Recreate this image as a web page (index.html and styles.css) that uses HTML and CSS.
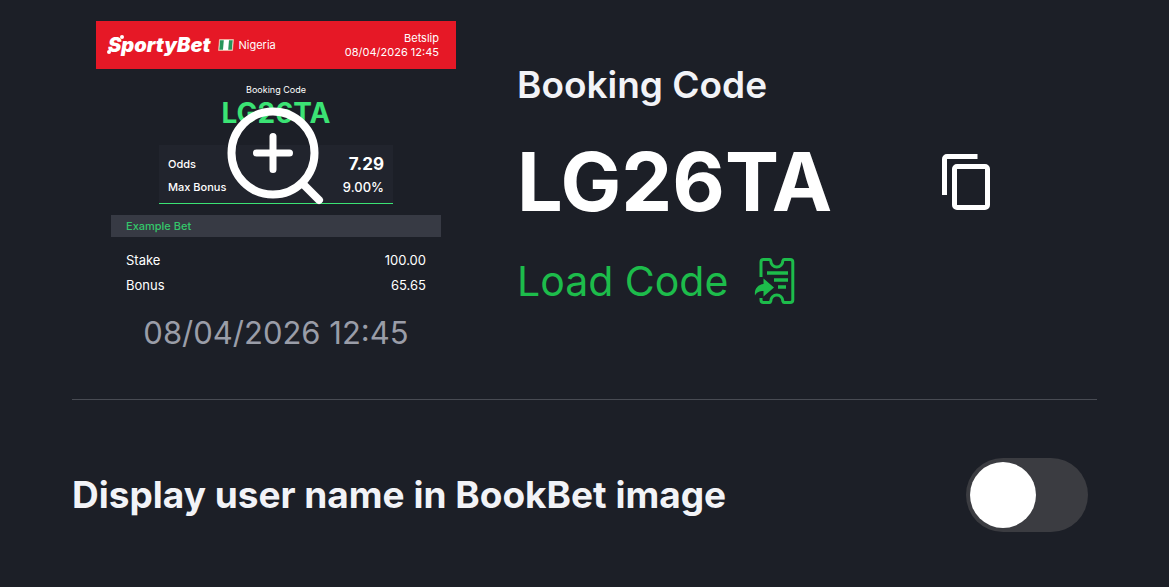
FILE: index.html
```
<!DOCTYPE html>
<html lang="en">
<head>
  <title>Booking Code</title>
  <meta charset="UTF-8">
  <meta name="viewport" content="width=device-width, initial-scale=1">
  <link rel="stylesheet" href="styles.css">
</head>
<body>
  <main class="share">
    <section class="booking">
      <div class="preview">
        <header class="slip-header">
          <span class="logo">SportyBet</span>
          <svg class="flag" viewBox="0 0 16 12" aria-hidden="true">
            <path d="M1.5 .5h14l-1 11h-14z" fill="#fff"/>
            <path d="M2 1.2h3.8l-.8 9.6H1.2zM11 1.2h3.8l-.9 9.6h-3.7z" fill="#27955a"/>
            <path d="M1.5 .5h14l-1 11h-14z" fill="none" stroke="#f3b9a0" stroke-width=".7"/>
          </svg>
          <span class="country">Nigeria</span>
          <span class="slip-date">Betslip<br>08/04/2026 12:45</span>
        </header>
        <p class="slip-label">Booking Code</p>
        <p class="slip-code">LG26TA</p>
        <dl class="odds">
          <div class="line"><dt>Odds</dt><dd class="odds-total">7.29</dd></div>
          <div class="line"><dt>Max Bonus</dt><dd class="odds-bonus">9.00%</dd></div>
        </dl>
        <h2 class="slip-title">Example Bet</h2>
        <dl class="amounts">
          <div class="line"><dt>Stake</dt><dd>100.00</dd></div>
          <div class="line"><dt>Bonus</dt><dd>65.65</dd></div>
        </dl>
        <p class="timestamp">08/04/2026 12:45</p>
        <button class="zoom" type="button" aria-label="Enlarge betslip">
          <svg viewBox="0 0 98 98" fill="none" stroke="#fff" stroke-linecap="round" aria-hidden="true">
            <circle cx="46" cy="46" r="41.5" stroke-width="8"/>
            <path d="M75 76l17 17" stroke-width="8"/>
            <path d="M46 29.500v33M29.500 46h33" stroke-width="7"/>
          </svg>
        </button>
      </div>

      <div class="details">
        <h1 class="details-label">Booking Code</h1>
        <div class="code-row">
          <strong class="code">LG26TA</strong>
          <button class="copy" type="button" aria-label="Copy code">
            <svg viewBox="0 0 48 56" fill="none" stroke="#fff" stroke-width="5" aria-hidden="true">
              <path d="M2.500 41V5a2.500 2.500 0 0 1 2.500-2.500h30.500"/>
              <rect x="12.500" y="12.500" width="33" height="41" rx="2.500"/>
            </svg>
          </button>
        </div>
        <a class="load" href="#load">
          Load Code
          <svg viewBox="0 0 42 46" fill="none" stroke="currentColor" stroke-width="3" aria-hidden="true">
            <path d="M7 19V4q0-2.500 2.500-2.500h6c1 0 1 .6 1.300 1.500a6 6 0 0 0 12 0c.3-.9.3-1.500 1.300-1.500h6q2.700 0 2.700 2.500v38q0 2.500-2.700 2.500h-6c-1 0-1-.6-1.300-1.500a6 6 0 0 0-12 0c-.3.9-.3 1.500-1.300 1.500h-6Q7 44.500 7 42v-2"/>
            <path d="M13 15h21M20 22h14M24 29h8" stroke-width="3.500"/>
            <path d="M9.500 20.500L20 29.500l-10.500 9v-5.500c-4 0-6.500 1-8.500 4.500C0 31 4 26.500 9.500 26z" fill="currentColor" stroke="none"/>
          </svg>
        </a>
      </div>
    </section>

    <div class="setting">
      <label class="setting-label" for="show-name">Display user name in BookBet image</label>
      <input class="switch" type="checkbox" role="switch" id="show-name">
    </div>
  </main>
</body>
</html>
```

FILE: styles.css
```
* {
  box-sizing: border-box;
}
body {
  background-color: #1C1F27;
  color: #FFF;
  font-family: Inter, "Liberation Sans", sans-serif;
  margin: 0;
}
h1, h2, p, dl, dd {
  margin: 0;
}
button {
  background: none;
  border: 0;
  cursor: pointer;
  padding: 0;
}
svg {
  display: block;
}
.share {
  padding: 21px 72px 40px;
}
.booking {
  border-bottom: 1px solid #484B53;
  display: flex;
  gap: 61px;
  padding: 0 107px 48px 24px;
}

/* BETSLIP PREVIEW */
.preview {
  flex: 0 0 360px;
  position: relative;
}
.slip-header {
  align-items: center;
  background-color: #E61826;
  display: flex;
  font-size: 11px;
  line-height: 14px;
  padding: 10px 17px 10px 12px;
}
.logo {
  font-size: 20px;
  font-style: italic;
  font-weight: 900;
  line-height: 20px;
  position: relative;
}
/* the two dots at the ends of the S */
.logo::before,
.logo::after {
  background-color: #FFF;
  border-radius: 50%;
  content: "";
  height: 4px;
  position: absolute;
  width: 4px;
}
.logo::before {
  left: 12px;
  top: 0;
}
.logo::after {
  bottom: 1px;
  left: -1px;
}
.flag {
  height: 12px;
  margin: 0 4px 0 8px;
  width: 16px;
}
.slip-date {
  margin-left: auto;
  text-align: right;
}
.slip-label {
  font-size: 9px;
  line-height: 12px;
  padding-top: 15px;
  text-align: center;
}
.slip-code {
  color: #3BE374;
  font-size: 28px;
  font-weight: 700;
  line-height: 34px;
  text-align: center;
}
.line {
  align-items: center;
  display: flex;
  justify-content: space-between;
}
.odds {
  background-color: #21242D;
  border-bottom: 1px solid #3BE374;
  font-size: 11px;
  font-weight: 500;
  line-height: 23px;
  margin: 15px 63px 11px;
  padding: 8px 9px 4px;
}
.odds-total {
  font-size: 17px;
  font-weight: 700;
}
.odds-bonus {
  font-size: 13px;
}
.slip-title {
  background-color: #373A44;
  color: #34C76A;
  font-size: 11px;
  font-weight: 500;
  line-height: 22px;
  margin: 0 15px;
  padding: 0 15px;
}
.amounts {
  font-size: 13px;
  line-height: 25px;
  padding: 11px 30px 0;
}
.timestamp {
  color: #9A9DA8;
  font-size: 31px;
  line-height: 36px;
  padding-top: 17px;
  text-align: center;
}
.zoom {
  left: 131px;
  position: absolute;
  top: 86px;
  width: 98px;
}

/* CODE AND ACTIONS */
.details {
  flex: 1;
  padding-top: 42px;
}
.details-label {
  color: #F2F3F7;
  font-size: 37px;
  font-weight: 600;
  line-height: 44px;
}
.code-row {
  align-items: center;
  display: flex;
  justify-content: space-between;
  padding: 25px 0 23px;
}
.code {
  font-size: 81px;
  font-weight: 700;
  line-height: 100px;
}
.copy {
  width: 48px;
}
.load {
  align-items: center;
  color: #1DBC4B;
  display: inline-flex;
  font-size: 41px;
  gap: 26px;
  line-height: 52px;
  text-decoration: none;
}
.load svg {
  width: 42px;
}

/* USER NAME SWITCH */
.setting {
  align-items: center;
  display: flex;
  justify-content: space-between;
  padding: 58px 9px 0 0;
}
.setting-label {
  color: #F2F3F7;
  font-size: 37px;
  font-weight: 700;
  line-height: 44px;
}
.switch {
  appearance: none;
  background-color: #3B3C41;
  border-radius: 37px;
  cursor: pointer;
  flex: none;
  height: 74px;
  margin: 0;
  padding: 4px;
  width: 122px;
}
.switch::before {
  background-color: #FFF;
  border-radius: 50%;
  content: "";
  display: block;
  height: 66px;
  width: 66px;
}
.switch:checked {
  background-color: #1DBC4B;
}
.switch:checked::before {
  margin-left: auto;
}
```
